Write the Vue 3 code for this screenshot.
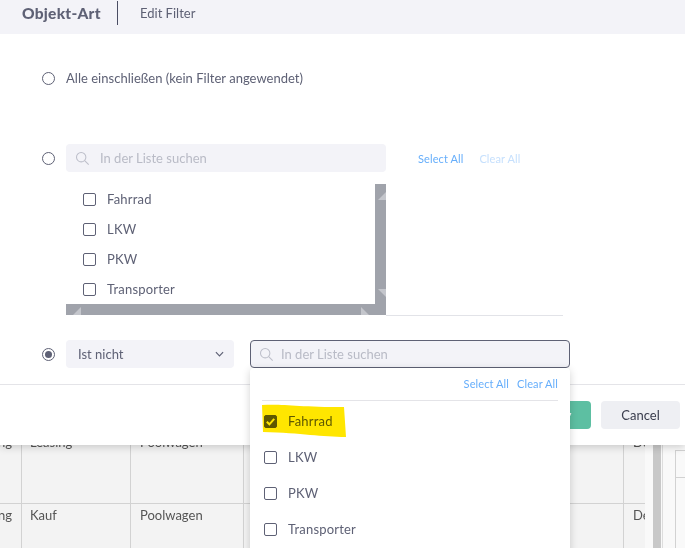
<script setup>
const listItems = ['Fahrrad', 'LKW', 'PKW', 'Transporter']
const tableRows = [
  { a: 'Leasing', b: 'Leasing', c: 'Poolwagen', d: 'Deutschland' },
  { a: 'Leasing', b: 'Kauf', c: 'Poolwagen', d: 'Deutschland' }
]
</script>

<template>
  <div class="page">
    <div class="backdrop">
      <div class="table">
        <div v-for="(r, i) in tableRows" :key="i" class="t-row">
          <div class="cell c0"><span class="c0-text">{{ r.a }}</span></div>
          <div class="cell c1">{{ r.b }}</div>
          <div class="cell c2">{{ r.c }}</div>
          <div class="cell c3"></div>
          <div class="cell c4">{{ r.d }}</div>
        </div>
      </div>
      <div class="gutter"></div>
      <div class="vbar"></div>
      <div class="side">
        <div class="side-box first"><div class="side-line l1"></div></div>
        <div class="side-box second"><div class="side-line l2"></div></div>
      </div>
    </div>

    <section class="modal">
      <header class="head">
        <strong class="title">Objekt-Art</strong>
        <span class="head-sep"></span>
        <span class="head-sub">Edit Filter</span>
      </header>

      <div class="body">
        <div class="opt-all">
          <span class="radio"></span>
          <span class="all-label">Alle einschließen (kein Filter angewendet)</span>
        </div>

        <div class="opt-list">
          <span class="radio r2"></span>
          <div class="list-col">
            <div class="search">
              <svg class="glass" viewBox="0 0 16 16" width="15" height="15"><circle cx="6.6" cy="6.6" r="5" /><path d="M10.3 10.3 14.6 14.6" /></svg>
              <span class="ph">In der Liste suchen</span>
            </div>
            <div class="scroller">
              <div class="rows">
                <label v-for="it in listItems" :key="it" class="row">
                  <span class="box"></span>
                  <span class="row-text">{{ it }}</span>
                </label>
              </div>
              <div class="sb-v">
                <svg class="arrow up" viewBox="0 0 8 8" width="8" height="8"><path d="M8 0V8H0Z" /></svg>
                <svg class="arrow dn" viewBox="0 0 8 8" width="8" height="8"><path d="M0 0H8V8Z" /></svg>
              </div>
              <div class="sb-h">
                <svg class="arrow lf" viewBox="0 0 8 8" width="8" height="8"><path d="M8 0V8H0Z" /></svg>
                <svg class="arrow rt" viewBox="0 0 8 8" width="8" height="8"><path d="M0 0 8 8H0Z" /></svg>
              </div>
            </div>
          </div>
          <div class="actions">
            <span class="link">Select All</span>
            <span class="link faded">Clear All</span>
          </div>
        </div>
        <div class="sep"></div>

        <div class="opt-not">
          <span class="radio on"><i></i></span>
          <div class="select">
            <span>Ist nicht</span>
            <svg viewBox="0 0 10 6" width="9" height="6"><path d="M1 1 5 5 9 1" /></svg>
          </div>
          <div class="search focus">
            <svg class="glass" viewBox="0 0 16 16" width="15" height="15"><circle cx="6.6" cy="6.6" r="5" /><path d="M10.3 10.3 14.6 14.6" /></svg>
            <span class="ph">In der Liste suchen</span>
          </div>
        </div>
      </div>

      <footer class="foot">
        <button class="btn ok">Apply</button>
        <button class="btn cancel">Cancel</button>
      </footer>
    </section>

    <div class="drop">
      <div class="drop-actions">
        <span class="link">Select All</span>
        <span class="link">Clear All</span>
      </div>
      <div class="drop-rows">
        <label v-for="(it, i) in listItems" :key="it" class="drow">
          <span class="box" :class="{ checked: i === 0 }">
            <svg v-if="i === 0" viewBox="0 0 13 13" width="13" height="13"><path d="M2.8 6.8 5.4 9.3 10.2 3.8" /></svg>
          </span>
          <span class="row-text">{{ it }}</span>
        </label>
      </div>
      <svg class="marker" viewBox="0 0 84 34" width="84" height="34"><path d="M0 1C20-.5 35 3 82 3L84 33C60 33 40 29 1 28Z" /></svg>
    </div>
  </div>
</template>

<style>
html, body { margin: 0; padding: 0; background: #fff; }
</style>

<style scoped>
.page {
  position: relative;
  width: 685px;
  height: 548px;
  overflow: hidden;
  font-family: Lato, "Noto Sans", sans-serif;
  color: #5e6175;
  background: #f9f9f9;
}

/* background table */
.backdrop { display: flex; height: 548px; padding-top: 431px; box-sizing: border-box; }
.table { width: 645px; background: #f3f3f3; overflow: hidden; flex: none; }
.t-row { display: flex; height: 72px; border-bottom: 1px solid #d2d2d2; box-sizing: content-box; }
.cell {
  flex: none;
  height: 100%;
  box-sizing: border-box;
  padding: 3px 0 0 9px;
  border-right: 1px solid #d2d2d2;
  font-size: 13px;
  line-height: 16px;
  color: #555;
  overflow: hidden;
  white-space: nowrap;
}
.t-row + .t-row .cell { padding-top: 3px; }
.c0 { width: 22px; padding-left: 0; direction: rtl; text-align: left; padding-right: 9px; }
.c0-text { direction: ltr; display: inline-block; }
.c1 { width: 109px; padding-left: 8px; }
.c2 { width: 113px; }
.c3 { width: 380px; }
.c4 { width: 22px; border-right: 0; }
.gutter { width: 8px; flex: none; }
.vbar { width: 8px; flex: none; background: #c8c8c8; margin-top: -40px; }
.side { flex: 1; margin-left: 1px; border-left: 1px solid #ddd; padding-left: 12px; margin-top: -40px; }
.side-box { border: 1px solid #d2d2d2; border-right: 0; box-sizing: border-box; }
.side-box.first { height: 92px; padding-top: 55px; margin-top: -40px; margin-bottom: 7px; }
.side-box.second { height: 100px; padding-top: 26px; }
.side-line { border-top: 1px solid #d2d2d2; }

/* modal */
.modal {
  position: absolute;
  left: 0;
  top: 0;
  width: 685px;
  height: 445px;
  background: #fff;
  box-shadow: 0 2px 8px rgba(0, 0, 0, 0.18);
  display: flex;
  flex-direction: column;
}
.head {
  height: 34px;
  flex: none;
  background: #f3f3f8;
  display: flex;
  align-items: flex-start;
  padding-left: 22px;
  box-sizing: border-box;
}
.title { font-size: 15.5px; line-height: 26px; font-weight: 900; color: #5e6175; width: 95px; letter-spacing: 0.25px; white-space: nowrap; }
.head-sep { width: 1px; height: 24px; margin-top: 1px; background: #4a4d63; }
.head-sub { font-size: 13px; line-height: 27px; margin-left: 22px; color: #5e6175; }

.body { flex: 1; padding-left: 42px; box-sizing: border-box; min-height: 0; }
.radio {
  width: 13px;
  height: 13px;
  flex: none;
  box-sizing: border-box;
  border: 1px solid #5e6175;
  border-radius: 50%;
  display: inline-flex;
  align-items: center;
  justify-content: center;
}
.radio i { width: 7px; height: 7px; border-radius: 50%; background: #5e6175; }
.opt-all { display: flex; align-items: center; height: 18px; margin-top: 35px; gap: 11px; }
.all-label { font-size: 13px; line-height: 18px; letter-spacing: 0.02px; }

.opt-list { display: flex; align-items: flex-start; margin-top: 57px; gap: 11px; }
.r2 { margin-top: 8px; }
.list-col { width: 320px; flex: none; }
.search {
  height: 28px;
  background: #f3f3f8;
  border-radius: 4px;
  display: flex;
  align-items: center;
  box-sizing: border-box;
  padding-left: 9px;
}
.glass { fill: none; stroke: #bcbec9; stroke-width: 1.1; flex: none; }
.ph { font-size: 13px; margin-left: 10px; color: #b9bbc6; }
.scroller { position: relative; height: 132px; margin-top: 12px; background: #fff; }
.rows { padding: 0 0 0 17px; }
.row { display: flex; align-items: center; height: 30px; gap: 11px; }
.row-text { font-size: 13px; line-height: 16px; color: #5e6175; letter-spacing: 0.2px; }
.box {
  width: 13px;
  height: 13px;
  flex: none;
  box-sizing: border-box;
  border: 1px solid #5e6175;
  border-radius: 2px;
  display: inline-block;
}
.box.checked { background: #5e6175; }
.box.checked svg { display: block; margin: -1px; fill: none; stroke: #fff; stroke-width: 2; }
.sb-v { position: absolute; top: 0; right: 0; width: 11px; height: 131px; background: #a0a3ab; }
.sb-h { position: absolute; left: 0; right: 0; top: 120px; height: 11px; background: #a0a3ab; }
.arrow { position: absolute; fill: #c4c6cc; }
.arrow.up { top: 8px; left: 3px; }
.arrow.dn { top: 105px; left: 3px; }
.arrow.lf { left: 7px; top: 3px; }
.arrow.rt { left: 295px; top: 3px; }

.actions { display: flex; gap: 16px; margin-top: 8px; margin-left: 21px; }
.link { font-size: 11px; line-height: 13px; color: #66aefb; white-space: nowrap; letter-spacing: 0.1px; }
.link.faded { color: #c6e0fd; }
.sep { width: 497px; margin-left: 24px; border-top: 1px solid #e2e3e8; margin-top: -1px; }
.opt-not { display: flex; align-items: center; margin-top: 24px; }
.on { margin-right: 11px; }
.select {
  width: 168px;
  height: 28px;
  flex: none;
  background: #f3f3f8;
  border-radius: 4px;
  display: flex;
  align-items: center;
  justify-content: space-between;
  padding: 0 10px 0 12px;
  box-sizing: border-box;
  font-size: 13px;
}
.select svg { fill: none; stroke: #5e6175; stroke-width: 1.3; }
.search.focus { width: 320px; margin-left: 16px; border: 1px solid #5e6175; padding-left: 8px; flex: none; }
.search.focus .ph { margin-left: 7px; }

.foot {
  position: absolute;
  left: 0;
  right: 0;
  top: 384px;
  height: 61px;
  border-top: 1px solid #e4e4e8;
  box-sizing: border-box;
  display: flex;
  justify-content: flex-end;
  align-items: flex-start;
  padding: 16px 5px 0 0;
  gap: 10px;
}
.btn { height: 28px; border: 0; border-radius: 4px; font-family: inherit; font-size: 13px; padding: 0; }
.ok { width: 62px; background: #5dbfa2; color: #fff; padding-right: 10px; }
.cancel { width: 79px; background: #eeeff3; color: #3a3d4d; }

/* dropdown */
.drop {
  position: absolute;
  left: 250px;
  top: 368px;
  width: 320px;
  height: 190px;
  background: #fff;
  border-radius: 4px;
  box-shadow: 0 2px 8px rgba(0, 0, 0, 0.18);
}
.drop-actions {
  display: flex;
  justify-content: flex-end;
  gap: 8px;
  margin: 0 12px;
  height: 33px;
  padding-bottom: 1px;
  box-sizing: border-box;
  align-items: center;
  border-bottom: 1px solid #e4e4e8;
}
.drop-rows { padding: 2px 0 0 14px; }
.drow { display: flex; align-items: center; height: 36px; gap: 11px; }
.marker {
  position: absolute;
  left: 12px;
  top: 36px;
  fill: #ffe600;
  mix-blend-mode: multiply;
}
</style>
